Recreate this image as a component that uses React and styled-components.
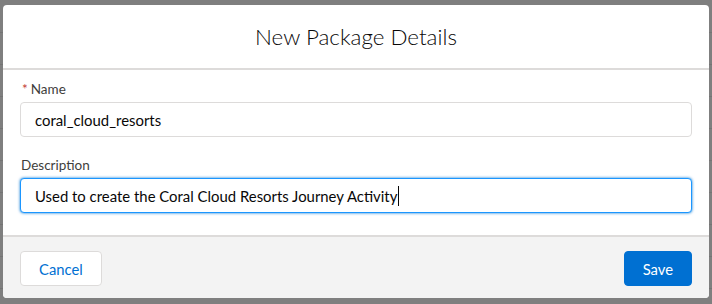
import React from "react";
import { styled, createGlobalStyle } from "styled-components";

const Global = createGlobalStyle`
  html, body {
    margin: 0;
    padding: 0;
    background: #7f7f7f;
  }
  body {
    font-family: Lato, "Open Sans", sans-serif;
  }
`;

const Backdrop = styled.div`
  width: 712px;
  height: 304px;
  box-sizing: border-box;
  padding: 5px 3px 6px 3px;
  background-color: #7f7f7f;
  background-image: repeating-linear-gradient(
    to bottom,
    transparent 0,
    transparent 31px,
    #747474 31px,
    #747474 32px
  );
  background-position: 0 1px;
`;

const Modal = styled.div`
  width: 706px;
  height: 293px;
  display: flex;
  flex-direction: column;
  border-radius: 4px;
  overflow: hidden;
  background: #fff;
`;

const Header = styled.header`
  height: 63px;
  flex-shrink: 0;
  display: flex;
  align-items: center;
  justify-content: center;
  border-bottom: 2px solid #dddbda;
`;

const Title = styled.h2`
  margin: 0;
  font-family: Lato, sans-serif;
  font-weight: 300;
  font-size: 22.4px;
  color: #080707;
`;

const Body = styled.div`
  flex: 1;
  padding: 10px 17px 0 17px;
  display: flex;
  flex-direction: column;
  gap: 19px;
`;

const Field = styled.div`
  display: flex;
  flex-direction: column;
  gap: 4px;
`;

const Label = styled.label`
  height: 18px;
  line-height: 18px;
  font-size: 13.5px;
  color: #3e3e3c;
  padding-left: ${(p) => (p.required ? "2px" : "1px")};
`;

const Star = styled.abbr`
  color: #c23934;
  text-decoration: none;
  margin-right: 3px;
`;

const Input = styled.div`
  box-sizing: border-box;
  height: 35px;
  display: flex;
  align-items: center;
  padding: 0 14px;
  border-radius: 4px;
  font-size: 14.9px;
  color: #080707;
  background: #fff;
  border: 1px solid ${(p) => (p.focused ? "#1b96ff" : "#dddbda")};
  box-shadow: ${(p) => (p.focused ? "0 0 3px #0176d3" : "none")};
`;

const Caret = styled.span`
  display: inline-block;
  width: 1px;
  height: 20px;
  background: #080707;
  margin-left: 1px;
`;

const Footer = styled.footer`
  height: 63px;
  flex-shrink: 0;
  box-sizing: border-box;
  border-top: 2px solid #dddbda;
  background: #f3f3f3;
  padding: 14px 17px 0 17px;
  display: flex;
  justify-content: space-between;
  align-items: flex-start;
`;

const Button = styled.button`
  height: 35px;
  padding: 0 18px;
  border-radius: 4px;
  font-family: Lato, sans-serif;
  font-size: 14.8px;
  cursor: pointer;
  color: ${(p) => (p.brand ? "#fff" : "#0070d2")};
  background: ${(p) => (p.brand ? "#0070d2" : "#fff")};
  border: 1px solid ${(p) => (p.brand ? "#0070d2" : "#dddbda")};
`;

export default function App() {
  return (
    <>
      <Global />
      <Backdrop>
        <Modal>
          <Header>
            <Title>New Package Details</Title>
          </Header>
          <Body>
            <Field>
              <Label required>
                <Star title="required">*</Star>Name
              </Label>
              <Input>coral_cloud_resorts</Input>
            </Field>
            <Field>
              <Label>Description</Label>
              <Input focused>
                Used to create the Coral Cloud Resorts Journey Activity
                <Caret />
              </Input>
            </Field>
          </Body>
          <Footer>
            <Button>Cancel</Button>
            <Button brand>Save</Button>
          </Footer>
        </Modal>
      </Backdrop>
    </>
  );
}
